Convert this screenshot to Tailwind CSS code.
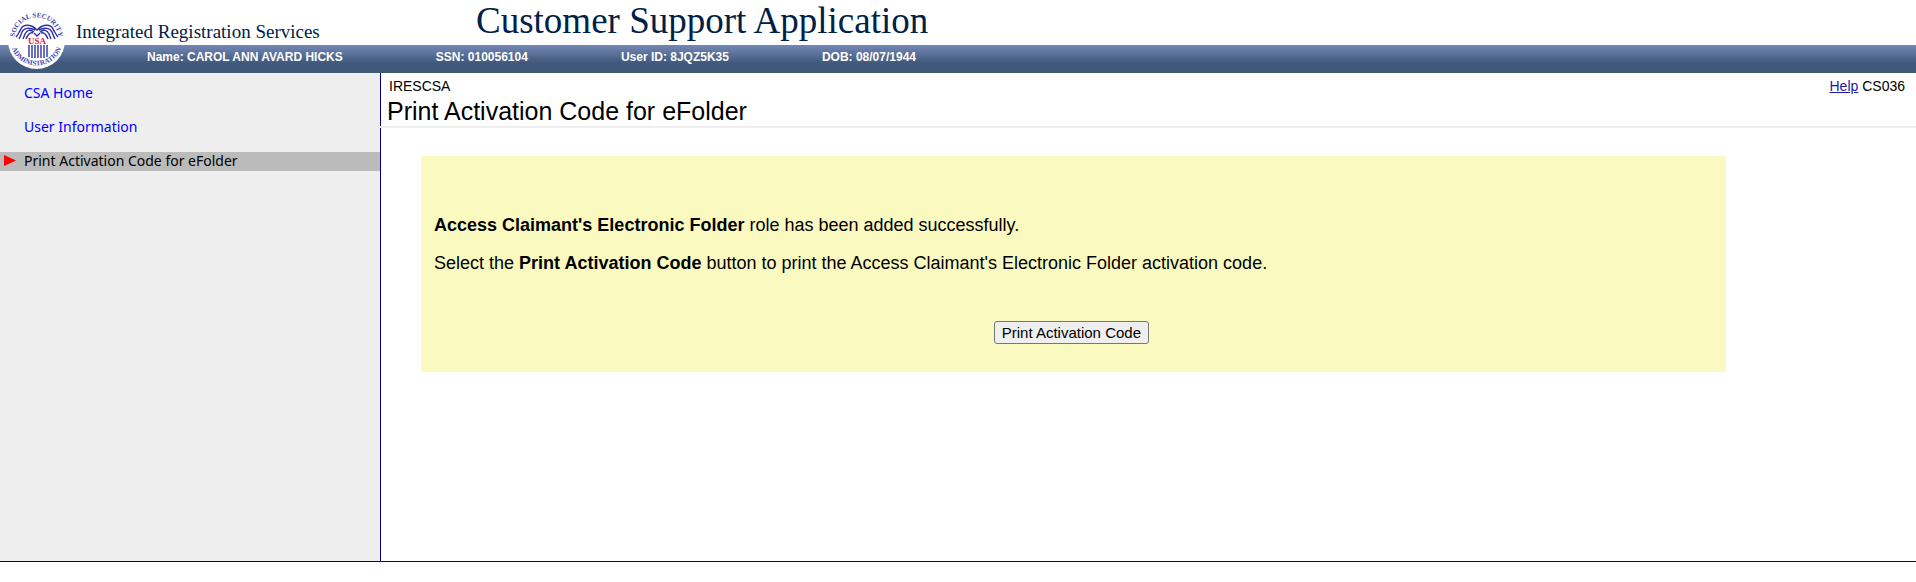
<!DOCTYPE html>
<html lang="en">

<head>
    <meta charset="UTF-8">
    <meta name="viewport" content="width=device-width, initial-scale=1.0">
    <script src="https://cdn.jsdelivr.net/npm/@tailwindcss/browser@4"></script>
    <title>Customer Support Application</title>
</head>

<body class="bg-white text-black font-['Liberation_Sans',Arial,sans-serif]">
    <header class="relative">
        <div class="flex h-[45px] pl-[76px] text-[#002147] font-['Liberation_Serif',Georgia,serif] whitespace-nowrap">
            <p class="w-[400px] pt-[18px] text-[19px] leading-[28px]">Integrated Registration Services</p>
            <p class="text-[37px] leading-[42px]">Customer Support Application</p>
        </div>
        <div
            class="flex items-center gap-[93px] h-[28px] pl-[147px] pb-[4px] bg-linear-to-b from-[#7488b6] to-[#40597b] to-65% text-white text-[12px] font-bold whitespace-nowrap">
            <p>Name: CAROL ANN AVARD HICKS</p>
            <p>SSN: 010056104</p>
            <p>User ID: 8JQZ5K35</p>
            <p>DOB: 08/07/1944</p>
        </div>
        <!-- agency seal, hangs over the bar -->
        <svg class="absolute left-[7px] top-[12px] w-[58px] h-[58px]" viewBox="0 0 58 58">
            <defs>
                <path id="ringTop" d="M8 32a22 22 0 1 1 43 0" />
                <path id="ringBottom" d="M3 27a26 26 0 1 0 53 0" />
            </defs>
            <circle cx="29.5" cy="28.5" r="28.5" fill="#fff" />
            <g fill="#4646b4" font-family="Liberation Serif, serif" font-size="7" font-weight="bold">
                <text text-anchor="middle"><textPath href="#ringTop" startOffset="50%">SOCIAL SECURITY</textPath></text>
                <text text-anchor="middle"><textPath href="#ringBottom" startOffset="50%">ADMINISTRATION</textPath></text>
            </g>
            <g fill="none" stroke="#3030a8" stroke-width="1.4">
                <path d="M29 17C24 12 16 12 14 17C12 20 11 23 9 25M28 18C22 15 17 16 15 20C14 23 13 25 12 27M27 20C23 17 20 18 18 22L16 27M26 21C23 20 21 22 19 27" />
                <path d="M31 17C36 12 44 12 46 17C48 20 49 23 51 25M32 18C38 15 43 16 45 20C46 23 47 25 48 27M33 20C37 17 40 18 42 22L44 27M34 21C37 20 39 22 41 27" />
                <path d="M26 15l4 3l4-3M27 21l3 3l3-3" />
                <path d="M22 33v12M25 33v13M28 33v13M31 33v13M34 33v13M37 33v13M40 33v12" />
            </g>
            <text x="30" y="32" fill="#e01844" font-family="Liberation Serif, serif" font-size="9" font-weight="bold"
                text-anchor="middle">USA</text>
        </svg>
    </header>

    <div class="flex min-h-[489px] border-b border-[#000080]">
        <nav class="w-[380px] shrink-0 pt-[11px] bg-[#eeeeee] text-[14px] leading-[17px] font-['Noto_Sans',Verdana,sans-serif]">
            <ul class="flex flex-col gap-[15px]">
                <li class="pl-[24px] pb-[2px]"><a href="#" class="text-[#0000ff]">CSA Home</a></li>
                <li class="pl-[24px] pb-[2px]"><a href="#" class="text-[#0000ff]">User Information</a></li>
                <li class="flex items-center gap-[8px] pl-[4px] pb-[2px] bg-[#bbbbbb]">
                    <svg class="w-[12px] h-[11px]" viewBox="0 0 12 11">
                        <path d="M0 0l12 5.5l-12 5.5z" fill="#f00" />
                    </svg>
                    Print Activation Code for eFolder
                </li>
            </ul>
        </nav>
        <main class="grow">
            <div class="flex justify-between h-[53px] border-l border-[#000080] pl-[6px] pr-[11px] pt-[5px]">
                <div>
                    <p class="pl-[2px] text-[14px] leading-[16px]">IRESCSA</p>
                    <h1 class="text-[25px] leading-[34px]">Print Activation Code for eFolder</h1>
                </div>
                <p class="text-[14px] leading-[16px]"><a href="#" class="text-[#1a1aa6] underline">Help</a> CS036</p>
            </div>
            <hr class="border-t-2 border-[#eeeeee]">
            <div class="min-h-[433px] border-l border-[#000080] pt-[28px]">
                <section class="w-[85%] h-[216px] ml-[40px] pt-[58px] pl-[13px] pr-[17px] bg-[#fafac0] text-[18px] leading-[22px]">
                    <p><b>Access Claimant's Electronic Folder</b> role has been added successfully.</p>
                    <p class="pt-[16px]">Select the <b>Print Activation Code</b> button to print the Access Claimant's Electronic Folder activation code.</p>
                    <div class="flex justify-center pt-[47px]">
                        <button type="button"
                            class="px-[7px] h-[23px] rounded-[3px] border border-[#767676] bg-[#efefef] text-[15px] leading-[21px]">Print Activation Code</button>
                    </div>
                </section>
            </div>
        </main>
    </div>
</body>

</html>
